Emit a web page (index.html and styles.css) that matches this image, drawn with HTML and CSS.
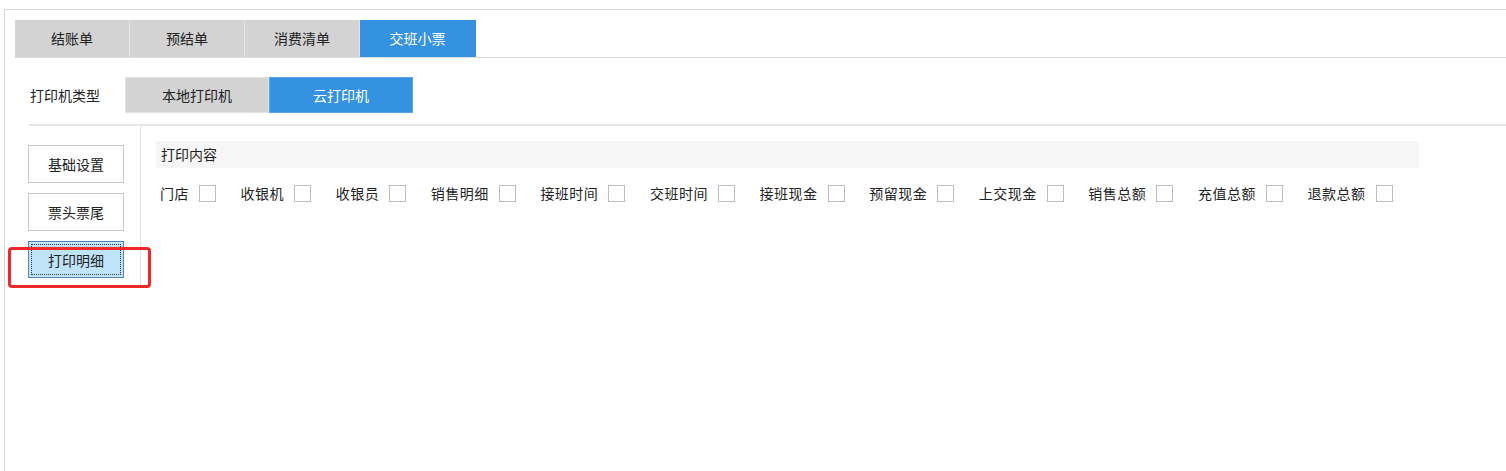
FILE: index.html
```html
<!DOCTYPE html>
<html lang="zh-CN">
<head>
  <meta charset="UTF-8" />
  <title>交班小票</title>
  <link rel="stylesheet" href="styles.css">
</head>
<body>
  <div class="frame">
    <div class="tabs">
      <div class="tab">结账单</div>
      <div class="tab">预结单</div>
      <div class="tab">消费清单</div>
      <div class="tab active">交班小票</div>
    </div>

    <div class="printer-row">
      <span class="printer-label">打印机类型</span>
      <div class="printer-btn">本地打印机</div>
      <div class="printer-btn active">云打印机</div>
    </div>

    <div class="setting-area">
      <div class="side-menu">
        <button class="side-btn">基础设置</button>
        <button class="side-btn">票头票尾</button>
        <button class="side-btn selected"><span class="focus-ring">打印明细</span></button>
      </div>
      <div class="content">
        <div class="section-title">打印内容</div>
        <div class="check-row">
          <label class="check-item">门店<span class="box"></span></label>
          <label class="check-item">收银机<span class="box"></span></label>
          <label class="check-item">收银员<span class="box"></span></label>
          <label class="check-item">销售明细<span class="box"></span></label>
          <label class="check-item">接班时间<span class="box"></span></label>
          <label class="check-item">交班时间<span class="box"></span></label>
          <label class="check-item">接班现金<span class="box"></span></label>
          <label class="check-item">预留现金<span class="box"></span></label>
          <label class="check-item">上交现金<span class="box"></span></label>
          <label class="check-item">销售总额<span class="box"></span></label>
          <label class="check-item">充值总额<span class="box"></span></label>
          <label class="check-item">退款总额<span class="box"></span></label>
        </div>
      </div>
    </div>
  </div>

  <div class="mark"></div>
</body>
</html>
```

FILE: styles.css
```css
body {
  margin: 0;
  background: #fff;
  font-family: "Noto Sans CJK SC", "Microsoft YaHei", sans-serif;
  font-size: 14px;
  color: #222;
}
.frame {
  margin: 9px 0 0 4px;
  height: 462px;
  box-sizing: border-box;
  border-top: 1px solid #d6d6d6;
  border-left: 1px solid #d6d6d6;
  padding: 10px 0 0 10px;
}
.tabs {
  display: flex;
  border-bottom: 1px solid #dcdcdc;
}
.tab {
  width: 114px;
  height: 37px;
  line-height: 37px;
  text-align: center;
  background: #d3d3d3;
  border-right: 1px solid #e4e4e4;
}
.tab.active {
  width: 115px;
  background: #3592e0;
  color: #fff;
  border-right-color: #3592e0;
}
.printer-row {
  display: flex;
  align-items: center;
  margin-top: 19px;
  padding-left: 15px;
}
.printer-label {
  width: 95px;
}
.printer-btn {
  width: 142px;
  height: 34px;
  line-height: 34px;
  text-align: center;
  background: #d3d3d3;
  border: 1px solid #e2e2e2;
}
.printer-btn.active {
  background: #3592e0;
  border-color: #5aa6e8;
  color: #fff;
}
.setting-area {
  display: flex;
  margin: 11px 0 0 14px;
  border-top: 2px solid #e6e6e6;
}
.side-menu {
  width: 113px;
  height: 162px;
  border-right: 1px solid #e2e2e2;
  display: flex;
  flex-direction: column;
  align-items: flex-start;
  gap: 10px;
  padding-top: 19px;
  box-sizing: border-box;
  margin-left: -1px;
}
.side-btn {
  width: 96px;
  height: 38px;
  background: #fff;
  border: 1px solid #c9c9c9;
  font-family: inherit;
  font-size: 14px;
  color: #222;
  padding: 0;
}
.side-btn.selected {
  background: #bfe4f9;
  border-color: #4d86b5;
  height: 37px;
  padding: 2px;
}
.focus-ring {
  display: flex;
  align-items: center;
  justify-content: center;
  height: 100%;
  border: 1px dotted #333;
  box-sizing: border-box;
}
.content {
  padding: 15px 0 0 15px;
}
.section-title {
  width: 1258px;
  height: 27px;
  line-height: 27px;
  padding-left: 5px;
  background: #f6f6f6;
}
.check-row {
  display: flex;
  align-items: center;
  margin-top: 15px;
  padding-left: 4px;
  height: 20px;
}
.check-item {
  display: flex;
  align-items: center;
  flex-shrink: 0;
  letter-spacing: 0.5px;
  margin-right: 24.6px;
}
.box {
  flex-shrink: 0;
  width: 15px;
  height: 15px;
  margin-left: 10px;
  border: 1px solid #bdbdbd;
  background: #fff;
}
.mark {
  position: absolute;
  left: 8px;
  top: 247px;
  width: 137px;
  height: 35px;
  border: 3px solid #f02828;
  border-radius: 4px;
}
```
